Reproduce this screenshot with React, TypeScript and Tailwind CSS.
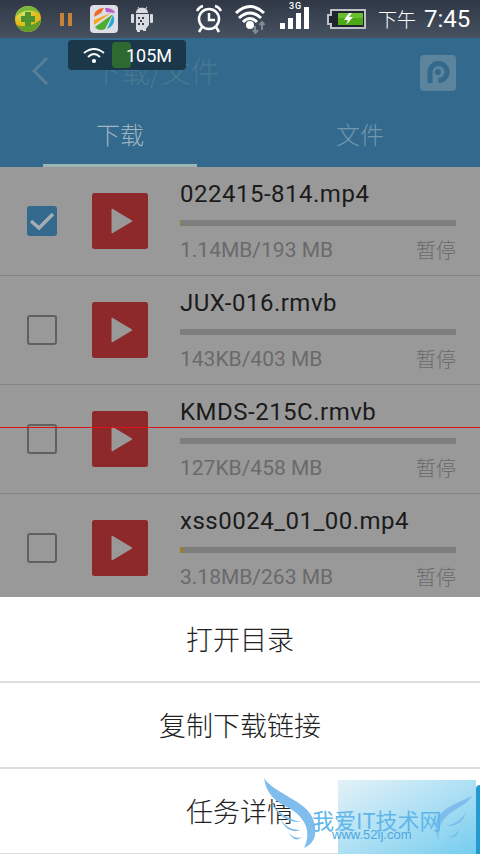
import { clsx } from "clsx";

interface Download {
    name: string;
    size: string;
    progress: number;
    checked?: boolean;
}

const DOWNLOADS: Download[] = [
    { name: "022415-814.mp4", size: "1.14MB/193 MB", progress: 0.3, checked: true },
    { name: "JUX-016.rmvb", size: "143KB/403 MB", progress: 0 },
    { name: "KMDS-215C.rmvb", size: "127KB/458 MB", progress: 0 },
    { name: "xss0024_01_00.mp4", size: "3.18MB/263 MB", progress: 1.2 },
];

const ACTIONS = ["打开目录", "复制下载链接", "任务详情"];

function StatusBar() {
    return (
        <div className="flex h-[38px] items-center bg-linear-to-b from-[#303846] to-[#465160] text-white">
            <svg width="270" height="38" viewBox="0 0 270 38" className="shrink-0">
                <defs>
                    <radialGradient id="ball" cx="35%" cy="25%">
                        <stop offset="0" stopColor="#d5e56a" />
                        <stop offset="1" stopColor="#e5b916" />
                    </radialGradient>
                </defs>
                <circle cx="28" cy="19" r="13" fill="url(#ball)" />
                <path d="M16 16C18 5 35 2 40 14C31 8 23 10 16 16Z" fill="#75b83b" />
                <path d="M17 25C25 28 35 25 41 19C40 34 21 36 17 25Z" fill="#5f9d2e" />
                <path d="M25 12h6v4h4v6h-4v4h-6v-4h-4v-6h4z" fill="#4c922f" />
                <path d="M60 13h4v13h-4zM68 13h4v13h-4z" fill="#c98237" />
                <rect x="90" y="5" width="28" height="28" rx="4" fill="#dedee4" />
                <path d="M94 17C94 11 99 8 104 8L101 13Z" fill="#f06a27" />
                <path d="M105 8C111 8 114 10 115 13L106 12Z" fill="#b65dcc" />
                <path d="M94 20L111 13L94 25Z" fill="#f6a51c" />
                <path d="M95 27L113 14L105 29C101 31 97 30 95 27Z" fill="#4bad36" />
                <path d="M113 15C116 21 113 27 107 29Z" fill="#27a9da" />
                <g fill="#d9dbe1">
                    <path d="M136 13C136 6 148 6 148 13zM136 14h13v11l-4 5h-9z" />
                    <rect x="131" y="14" width="3" height="9" rx="1" />
                    <rect x="150" y="14" width="3" height="9" rx="1" />
                    <path d="M137 28h3v4h-3zM143 27h3v4h-3z" />
                </g>
                <path d="M138 7l2 3M147 7l-2 3" stroke="#d9dbe1" />
                <path d="M138 17h2v2h-2zM142 17h2v2h-2zM140 20h2v2h-2zM138 23h2v2h-2zM142 23h2v2h-2z" fill="#39404c" />
                <g fill="none" stroke="white" strokeWidth="2.5">
                    <circle cx="209" cy="19" r="10" />
                    <path d="M209 13v7h6M202 27l-3 5M216 27l3 5M197 11q2-4 6-5M215 6q4 1 6 5" />
                </g>
                <g fill="none" stroke="white" strokeWidth="3">
                    <path d="M236 13Q250 0 264 13M239 18Q250 8 261 18M243 22Q250 15 257 22" />
                </g>
                <circle cx="250" cy="25" r="4" fill="white" />
                <path d="M255 26v6M253 30l2.500 3 2.500-3M262 30v-6M259.500 25l2.500-3 2.500 3" fill="none" stroke="#828b98" strokeWidth="2" />
            </svg>
            <svg width="102" height="38" viewBox="270 0 102 38" className="shrink-0">
                <text x="289" y="9" className="fill-white font-['Roboto',sans-serif] text-[9px] font-medium tracking-[1px]">3G</text>
                <path d="M280 23h5v6h-5zM288 18h5v11h-5zM296 13h5v16h-5zM304 7h5v22h-5z" fill="white" />
                <path d="M331 10h34v18h-34v-4h-3v-9h3z" fill="#20242c" stroke="#bcc1c9" strokeWidth="2" />
                <path d="M338 13h25v12h-25z" fill="#4aa915" />
                <path d="M338 13h25v5h-25z" fill="#68bd31" />
                <path d="M349 13l-5 7h4l-2 5 7-8h-4l3-4z" fill="white" />
            </svg>
            <span className="ml-[6px] font-['Noto_Sans_CJK_SC',sans-serif] text-[19px] font-light">下午</span>
            <span className="ml-2 font-['Roboto',sans-serif] text-[24px]">7:45</span>
        </div>
    );
}

function MemoryToast() {
    return (
        <div className="absolute top-10 left-[68px] flex h-[30px] w-[118px] items-center rounded bg-[#1b384b] text-white">
            <svg width="24" height="24" viewBox="0 0 24 24" className="ml-[14px]" fill="none" stroke="currentColor" strokeWidth="1.800">
                <path d="M2 10Q12 2 22 10M6 14Q12 8 18 14" />
                <circle cx="12" cy="18" r="1.200" fill="currentColor" />
            </svg>
            <div className="ml-[6px] h-[26px] w-[19px] rounded-sm bg-[#2e6932]" />
            <span className="-ml-[5px] font-['Roboto',sans-serif] text-[18px]">105M</span>
        </div>
    );
}

function Header() {
    return (
        <header className="h-[129px] bg-[#32698c] font-['Noto_Sans_CJK_SC',sans-serif]">
            <div className="flex h-[65px] items-center">
                <svg width="22" height="32" viewBox="0 0 22 32" className="ml-[30px]" fill="none" stroke="#587f98" strokeWidth="3">
                    <path d="M17 3L4 16L17 29" />
                </svg>
                <span className="ml-10 flex-1 text-[29px] font-light text-[#477891]">下载/文件</span>
                <svg width="36" height="36" viewBox="0 0 36 36" className="mr-6 mt-1">
                    <rect width="36" height="36" rx="4" fill="#5c849c" />
                    <path d="M10 28V17a8.500 8.500 0 1 1 8.500 8.500" fill="none" stroke="#32698c" strokeWidth="5" />
                    <circle cx="18" cy="17" r="3" fill="#32698c" />
                </svg>
            </div>
            <div className="flex h-16">
                <div className="flex w-1/2 justify-center">
                    <div className="flex h-full w-[154px] items-center justify-center border-b-[3px] border-[#9db4b9] text-[24px] font-light text-[#a0b5c1]">下载</div>
                </div>
                <div className="flex h-[61px] w-1/2 items-center justify-center text-[24px] font-light text-[#7297ad]">文件</div>
            </div>
        </header>
    );
}

function DownloadRow({ item }: { item: Download }) {
    return (
        <div className="flex h-[109px] border-b border-[#858585] font-['Roboto','Noto_Sans_CJK_SC',sans-serif]">
            <div
                className={clsx(
                    "mt-[39px] ml-[27px] size-[30px] shrink-0 rounded-[3px]",
                    item.checked ? "bg-[#32698c]" : "border-2 border-[#606060]",
                )}
            >
                {item.checked && (
                    <svg viewBox="0 0 30 30" fill="none" stroke="#a5adb2" strokeWidth="3.500">
                        <path d="M4 15l8 7L26 8" />
                    </svg>
                )}
            </div>
            <svg width="56" height="56" viewBox="0 0 56 56" className="mt-[26px] ml-[35px] shrink-0">
                <rect width="56" height="56" rx="2.500" fill="#8e292b" />
                <path d="M20 16L40 28L20 40Z" fill="#999" stroke="#999" strokeLinejoin="round" />
            </svg>
            <div className="mt-[9px] ml-8 w-[276px]">
                <div className="h-[36px] text-[24px] leading-[36px] tracking-[0.500px] text-[#1b1b1b]">{item.name}</div>
                <div className="mt-[8px] h-[6px] bg-[#7e7e7e]">
                    <div className="h-full bg-[#9b811d]" style={{ width: `${item.progress}%` }} />
                </div>
                <div className="mt-[9px] flex h-8 items-center justify-between text-[21px] text-[#6a6a6a]">
                    <span>{item.size}</span>
                    <span className="text-[20px] font-light">暂停</span>
                </div>
            </div>
        </div>
    );
}

function Watermark() {
    return (
        <div className="absolute right-0 bottom-0 h-[79px] w-[222px]">
            <div className="absolute top-[5px] left-20 h-[74px] w-[138px] bg-linear-to-br from-[#e3f2f7] to-[#73cdef]" />
            <div className="absolute top-[10px] right-0 h-[69px] w-1 rounded-tl bg-[#239bd0]" />
            <svg width="222" height="79" className="absolute inset-0" fill="#7fbded">
                <path d="M6 3C15 18 49 26 55 44C60 59 57 68 46 73C55 55 45 41 31 33C17 27 8 18 6 3Z" />
                <path d="M12 26Q23 43 43 47Q23 48 12 26ZM22 43Q29 56 43 55Q29 60 22 43ZM30 56Q35 65 44 62Q36 69 30 56Z" />
                <path d="M214 21C207 35 177 36 181 66C170 38 187 34 214 21ZM208 37Q202 48 188 51Q204 52 208 37ZM201 53Q198 61 190 62Q200 65 201 53Z" />
            </svg>
            <span className="absolute top-[29px] left-[54px] font-['Noto_Sans_CJK_SC',sans-serif] text-[22px] leading-[30px] whitespace-nowrap text-[#60b6e9]">我爱IT技术网</span>
            <span className="absolute top-[52px] left-[74px] font-['Liberation_Sans',sans-serif] text-[13px] leading-4 text-[#4ca7df]">www.52ij.com</span>
        </div>
    );
}

export default function App() {
    return (
        <div className="relative h-[854px] w-[480px] overflow-hidden bg-white">
            <StatusBar />
            <Header />
            <div className="h-[430px] overflow-hidden bg-[#999]">
                {DOWNLOADS.map((item) => (
                    <DownloadRow key={item.name} item={item} />
                ))}
            </div>
            <div className="bg-white font-['Noto_Sans_CJK_SC',sans-serif] text-[27px] font-light text-[#222]">
                {ACTIONS.map((label) => (
                    <div key={label} className="flex h-[86px] items-center justify-center border-b-2 border-[#ddd]">
                        {label}
                    </div>
                ))}
            </div>
            <MemoryToast />
            <div className="absolute top-[427px] left-0 h-px w-full bg-[#e01218]" />
            <Watermark />
        </div>
    );
}
